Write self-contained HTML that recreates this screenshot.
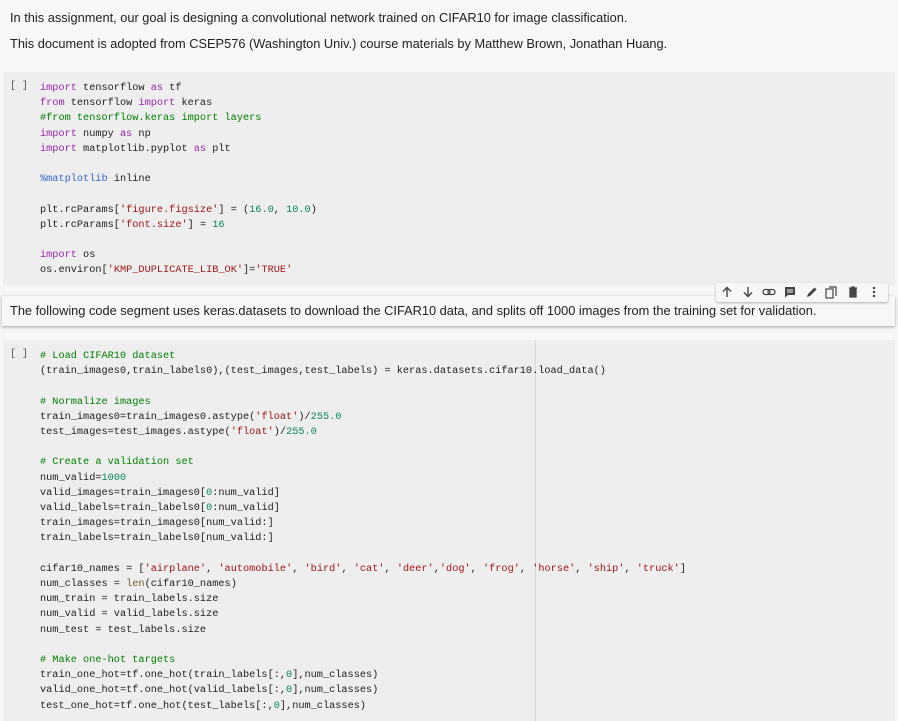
<!DOCTYPE html>
<html><head><meta charset="utf-8"><style>
body{margin:0;background:#f7f7f7;width:898px;height:721px;overflow:hidden;font-family:"Liberation Sans",sans-serif;color:#212121;position:relative}
.t{position:absolute;left:10px;font-size:12.8px;white-space:nowrap}
.cell{position:absolute;left:3px;width:892px;background:#eeeeee}
.br{position:absolute;left:10px;font:10px "Liberation Mono",monospace;color:#555}
pre{position:absolute;left:40px;margin:0;font:10.25px/15.2px "Liberation Mono",monospace;color:#212121}
.k{color:#9c27b0}.c{color:#008000}.s{color:#a31515}.n{color:#09885a}.m{color:#3367d6}.f{color:#795e26}
.md{position:absolute;left:2px;top:296px;width:893px;height:30px;background:#f7f7f7;box-shadow:0 1px 3px rgba(0,0,0,.35)}
.tb{position:absolute;left:716px;top:283px;width:172px;height:19px;background:#f7f7f7;box-shadow:0 1px 2px rgba(0,0,0,.3);border-radius:2px}
.tb svg{position:absolute;top:3px}
</style></head><body>
<div class="t" style="top:10px">In this assignment, our goal is designing a convolutional network trained on CIFAR10 for image classification.</div>
<div class="t" style="top:36px">This document is adopted from CSEP576 (Washington Univ.) course materials by Matthew Brown, Jonathan Huang.</div>
<div class="cell" style="top:72px;height:214px"></div>
<div class="br" style="top:81px">[ ]</div>
<pre style="top:81px"><span class="k">import</span> tensorflow <span class="k">as</span> tf
<span class="k">from</span> tensorflow <span class="k">import</span> keras
<span class="c">#from tensorflow.keras import layers</span>
<span class="k">import</span> numpy <span class="k">as</span> np
<span class="k">import</span> matplotlib.pyplot <span class="k">as</span> plt

<span class="m">%matplotlib</span> inline

plt.rcParams[<span class="s">'figure.figsize'</span>] = (<span class="n">16.0</span>, <span class="n">10.0</span>)
plt.rcParams[<span class="s">'font.size'</span>] = <span class="n">16</span>

<span class="k">import</span> os
os.environ[<span class="s">'KMP_DUPLICATE_LIB_OK'</span>]=<span class="s">'TRUE'</span></pre>
<div class="md"><div class="t" style="top:7px;left:8px">The following code segment uses keras.datasets to download the CIFAR10 data, and splits off 1000 images from the training set for validation.</div></div>
<div class="tb">
<svg style="left:5px" width="12" height="12" viewBox="0 0 12 12"><path d="M6 11V2M2 5.5L6 1.5L10 5.5" stroke="#444" stroke-width="1.4" fill="none"/></svg>
<svg style="left:26px" width="12" height="12" viewBox="0 0 12 12"><path d="M6 1v9M2 6.5L6 10.5L10 6.5" stroke="#444" stroke-width="1.4" fill="none"/></svg>
<svg style="left:46px" width="14" height="12" viewBox="0 0 14 12"><rect x="1" y="3.5" width="7" height="5" rx="2.5" stroke="#444" stroke-width="1.3" fill="none"/><rect x="6" y="3.5" width="7" height="5" rx="2.5" stroke="#444" stroke-width="1.3" fill="none"/></svg>
<svg style="left:68px" width="12" height="12" viewBox="0 0 12 12"><path d="M1 1h10v8H4l-3 2.5z" fill="#444"/><path d="M3 4h6M3 6h6" stroke="#f7f7f7"/></svg>
<svg style="left:90px" width="12" height="12" viewBox="0 0 12 12"><path d="M1 11l1-3 6.5-6.5 2 2L4 10z" fill="#444"/></svg>
<svg style="left:109px" width="12" height="13" viewBox="0 0 12 13"><path d="M4 1h7v9" stroke="#444" fill="none" stroke-width="1.2"/><rect x="1" y="3" width="7" height="9" stroke="#444" fill="none" stroke-width="1.2"/></svg>
<svg style="left:131px" width="12" height="12" viewBox="0 0 12 12"><path d="M2 2h8M4.5 1h3M3 3h6v8H3z" stroke="#444" stroke-width="1.3" fill="#444"/></svg>
<svg style="left:155px" width="6" height="12" viewBox="0 0 6 12"><circle cx="3" cy="2" r="1.2" fill="#444"/><circle cx="3" cy="6" r="1.2" fill="#444"/><circle cx="3" cy="10" r="1.2" fill="#444"/></svg>
</div>
<div class="cell" style="top:340px;height:381px"></div>
<div style="position:absolute;left:535px;top:340px;width:1px;height:381px;background:#d6d6d6"></div>
<div class="br" style="top:349px">[ ]</div>
<pre style="top:349px"><span class="c"># Load CIFAR10 dataset</span>
(train_images0,train_labels0),(test_images,test_labels) = keras.datasets.cifar10.load_data()

<span class="c"># Normalize images</span>
train_images0=train_images0.astype(<span class="s">'float'</span>)/<span class="n">255.0</span>
test_images=test_images.astype(<span class="s">'float'</span>)/<span class="n">255.0</span>

<span class="c"># Create a validation set</span>
num_valid=<span class="n">1000</span>
valid_images=train_images0[<span class="n">0</span>:num_valid]
valid_labels=train_labels0[<span class="n">0</span>:num_valid]
train_images=train_images0[num_valid:]
train_labels=train_labels0[num_valid:]

cifar10_names = [<span class="s">'airplane'</span>, <span class="s">'automobile'</span>, <span class="s">'bird'</span>, <span class="s">'cat'</span>, <span class="s">'deer'</span>,<span class="s">'dog'</span>, <span class="s">'frog'</span>, <span class="s">'horse'</span>, <span class="s">'ship'</span>, <span class="s">'truck'</span>]
num_classes = <span class="f">len</span>(cifar10_names)
num_train = train_labels.size
num_valid = valid_labels.size
num_test = test_labels.size

<span class="c"># Make one-hot targets</span>
train_one_hot=tf.one_hot(train_labels[:,<span class="n">0</span>],num_classes)
valid_one_hot=tf.one_hot(valid_labels[:,<span class="n">0</span>],num_classes)
test_one_hot=tf.one_hot(test_labels[:,<span class="n">0</span>],num_classes)</pre>
</body></html>
